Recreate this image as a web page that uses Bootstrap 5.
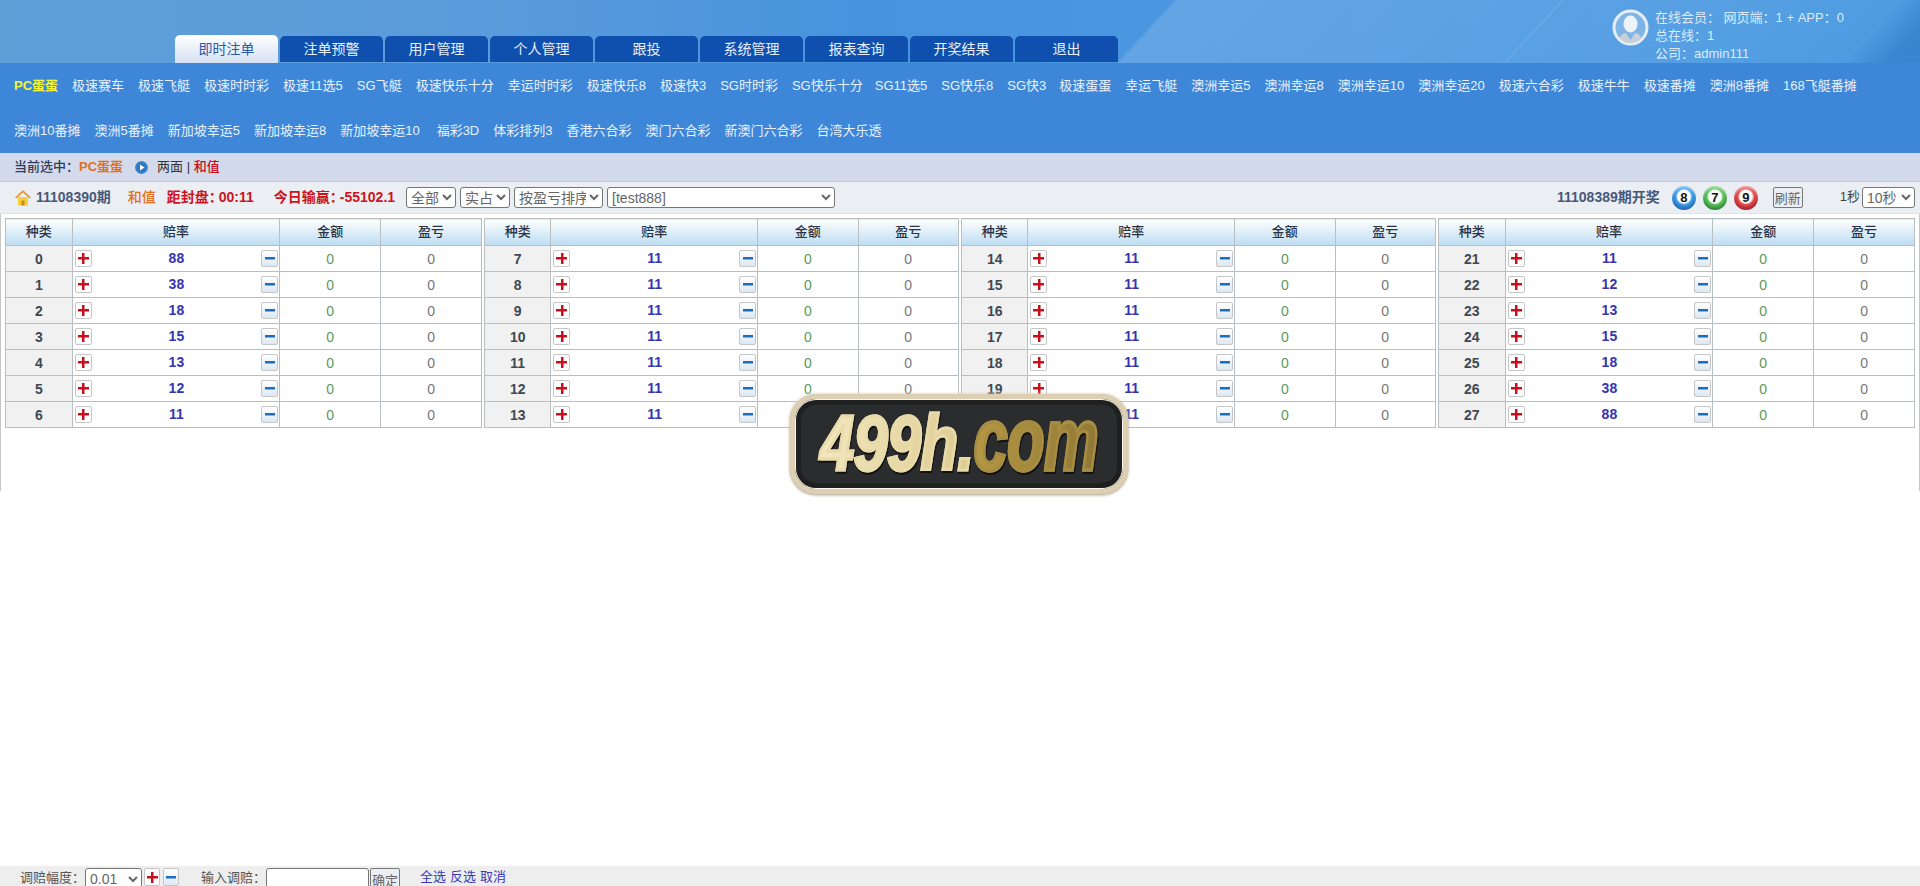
<!DOCTYPE html>
<html lang="zh-CN">
<head>
<meta charset="utf-8">
<title>即时注单</title>
<link href="https://cdn.jsdelivr.net/npm/bootstrap@5.3.0/dist/css/bootstrap.min.css" rel="stylesheet">
<style>
html,body{height:100%;overflow:hidden}
body{font-family:"Liberation Sans","Noto Sans CJK SC",sans-serif;font-size:13px;color:#333;background:#fff;line-height:1.3}
.shell{height:886px}
.hdr{height:63px;background:
 linear-gradient(133deg,transparent 1142px,rgba(255,255,255,.1) 1143px,transparent 1145px),
 linear-gradient(133deg,transparent 1390px,rgba(20,90,170,.35) 1425px),
 linear-gradient(133deg,transparent 858px,rgba(255,255,255,.14) 862px,rgba(255,255,255,.04) 1300px,transparent 1390px),
 linear-gradient(90deg,#5f9fd8 0,#5a9bdb 25%,#4793dd 45%,#4a96e0 60%,#4f9ce2 100%)}
.tabs{margin-left:175px;gap:2px;padding-bottom:1px}
.tabx{width:103px;height:26px;line-height:26px;text-align:center;font-size:14px;color:#e6effa;background:#0f4fae;border-radius:5px 5px 0 0;text-decoration:none}
.tabx.on{height:28px;line-height:28px;margin-top:-2px;margin-bottom:-1px;color:#2b5aa8;background:linear-gradient(#fff,#d5e1f2)}
.who{width:308px;padding-top:9px;color:#dcebfa;line-height:18px;gap:6px}
.who svg{flex:none}
.who .lines{white-space:pre}
.games{height:90px;background:#3e87d8;padding:0 0 0 7px;align-content:flex-start}
.games a{color:#e9f1fb;text-decoration:none;line-height:45px;padding:0 7px;white-space:nowrap}
.games a.on{color:#f4f63c;font-weight:700}
.games a.t2{margin-left:-2px}.games a.t1{margin-left:-1px}.games a.p3{margin-left:3px}
.crumb{height:29px;background:#d2daec;border-bottom:1px solid #c3c6cc;padding-left:14px}
.crumb b{color:#2d3c5c;font-weight:500}
.crumb .pc{color:#e2701e;font-weight:700;margin-right:12px}
.crumb svg{margin-right:9px}
.crumb .sum{color:#c8101c;font-weight:500}
.bar{height:32px;background:#ebeef2;padding:0 5px 0 15px;border-bottom:1px solid #e2e4e8}
.strong{font-size:14px;font-weight:700;white-space:nowrap}
.iss{color:#47597a;margin:0 17px 0 5px}
.org{color:#e2701e;margin-right:11px;font-weight:500}
.red{color:#cc1420}
.cln{margin-right:-4px}
.sel{height:21px;border:1px solid #767676;border-radius:3px;background:#fff;font:14px "Liberation Sans","Noto Sans CJK SC",sans-serif;color:#666;padding:0}
.s1{width:50px;margin-left:11px}.s2{width:50px;margin-left:4px}.s3{width:89px;margin-left:4px}.s4{width:228px;margin-left:4px}.s5{width:53px;margin-left:2px}
.ball{width:24px;height:24px;border-radius:50%;font-size:13px;font-weight:700;color:#111;text-align:center;line-height:23px;margin-left:7px;box-shadow:inset 0 -3px 3px rgba(0,0,40,.22),inset 0 2px 2px rgba(255,255,255,.55)}
.bb{background:radial-gradient(circle at 50% 44%,#fff 0 34%,#3a9ae6 46%,#1f78cc 100%)}
.bg1{background:radial-gradient(circle at 50% 44%,#fff 0 34%,#55c255 46%,#2f9a35 100%)}
.br{background:radial-gradient(circle at 50% 44%,#fff 0 34%,#e64848 46%,#bd2228 100%)}
.plainbtn{border:1px solid #777;border-radius:2px;background:#ebeef2;color:#666;font:13px "Liberation Sans","Noto Sans CJK SC",sans-serif;padding:0;height:21px;width:30px}
.wrap{height:277px;border-left:1px solid #c6c6c6;border-right:1px solid #c6c6c6;padding:4px 4px 0}
.quad{display:grid;grid-template-columns:477px 475px 475px 477px;column-gap:2px}
.odds{table-layout:fixed;--bs-table-border-color:#b9bec3;margin:0;font-size:14px}
.odds th,.odds td{padding:0;height:26px;text-align:center;vertical-align:middle;line-height:22px;font-weight:400;color:#777}
.odds thead th{height:27px;font-size:13px;font-weight:500;color:#2a3345;background:linear-gradient(#fff,#bcdcf2);--bs-table-bg:transparent}
.odds .c1{width:14%}.odds .c3{width:21.2%}
.odds .kind{background:#f1f1f1;--bs-table-bg:#f1f1f1;font-weight:700;color:#3f4952}
.odds .ov{display:flex;align-items:center;justify-content:space-between;padding:0 1px 0 2px;height:22px}
.odds .rate{font-weight:700;color:#3535b0;line-height:1;margin-bottom:2px}
.odds td.amt{color:#5a9a5a}
.up,.dn{width:17px;height:17px;border:1px solid #c6c6c6;border-radius:2px;padding:0;flex:none}
.up{background:linear-gradient(#c8101c,#c8101c) center/11px 2.5px no-repeat,linear-gradient(#c8101c,#c8101c) center/2.5px 11px no-repeat,#fff}
.dn{background:linear-gradient(#1c6cc0,#1c6cc0) center/10px 2.5px no-repeat,linear-gradient(#fff,#dde8f3)}
.foot{height:20px;background:#eee;padding-left:20px;padding-top:2px;color:#555;overflow:hidden;align-items:flex-start;white-space:nowrap}
.foot .s6{width:57px;margin-left:0;height:22px}
.foot .up,.foot .dn{height:18px;width:16px;margin-left:2px}
.foot .dn{margin-left:3px}
.foot .lab{line-height:20px}
.ipt{width:103px;height:22px;border:1px solid #767676;border-radius:3px;background:#fff;padding:0}
.foot .links{margin-left:20px;line-height:18px}
.foot .links a{color:#3b3bb5;text-decoration:none;margin-right:4px}
.stamp{position:absolute;left:790px;top:394px;width:338px;height:100px;border-radius:26px;background:#2b2c2e;border:5px solid #ddcfb2;box-shadow:0 0 0 1px #fbf6ec inset,0 0 0 6px #1e1f21 inset,0 1px 3px rgba(90,70,40,.5),0 0 4px #f1e9da;display:flex;align-items:center;justify-content:center;overflow:hidden}
.stamp .mk{display:inline-block;font:italic 700 78px/1 "Liberation Sans",sans-serif;transform:scaleX(.79);white-space:nowrap;letter-spacing:-1px;margin-top:-2px;filter:drop-shadow(1px 2px 0 #111)}
.stamp .a{-webkit-text-stroke:3px #e8dba9;background:linear-gradient(100deg,#f3e9c2,#dcc98f);-webkit-background-clip:text;background-clip:text;color:transparent}
.stamp .b{display:inline-block;transform:scaleY(1.13);transform-origin:50% 82%;-webkit-text-stroke:3px #a78d42;background:linear-gradient(100deg,#b89a45,#8d7636);-webkit-background-clip:text;background-clip:text;color:transparent}
</style>
</head>
<body>
<div class="shell d-flex flex-column position-relative">
  <header class="hdr d-flex">
    <nav class="tabs d-flex align-items-end">
      <a class="tabx on" href="#">即时注单</a>
      <a class="tabx" href="#">注单预警</a>
      <a class="tabx" href="#">用户管理</a>
      <a class="tabx" href="#">个人管理</a>
      <a class="tabx" href="#">跟投</a>
      <a class="tabx" href="#">系统管理</a>
      <a class="tabx" href="#">报表查询</a>
      <a class="tabx" href="#">开奖结果</a>
      <a class="tabx" href="#">退出</a>
    </nav>
    <div class="who d-flex ms-auto">
      <svg width="37" height="37" viewBox="0 0 37 37"><defs><clipPath id="cp"><circle cx="18.5" cy="18.5" r="15.5"/></clipPath></defs><circle cx="18.5" cy="18.5" r="16.5" fill="#7fb4e6" stroke="#e4edf6" stroke-width="3"/><g clip-path="url(#cp)"><ellipse cx="18.5" cy="15" rx="7" ry="8.5" fill="#eef3f8"/><path d="M6 37c0-9 4-13 8-13l4.500 7 4.500-7c4 0 8 4 8 13z" fill="#c9cfd6"/></g></svg>
      <div class="lines">在线会员： 网页端：1 + APP：0
总在线：1
公司：admin111</div>
    </div>
  </header>
  <nav class="games d-flex flex-wrap">
    <a class="on" href="#">PC蛋蛋</a><a href="#">极速赛车</a><a href="#">极速飞艇</a><a href="#">极速时时彩</a><a href="#">极速11选5</a><a href="#">SG飞艇</a><a href="#">极速快乐十分</a><a href="#">幸运时时彩</a><a href="#">极速快乐8</a><a href="#">极速快3</a><a href="#">SG时时彩</a><a href="#">SG快乐十分</a><a class="t2" href="#">SG11选5</a><a href="#">SG快乐8</a><a href="#">SG快3</a><a class="t1" href="#">极速蛋蛋</a><a href="#">幸运飞艇</a><a href="#">澳洲幸运5</a><a href="#">澳洲幸运8</a><a href="#">澳洲幸运10</a><a href="#">澳洲幸运20</a><a href="#">极速六合彩</a><a href="#">极速牛牛</a><a href="#">极速番摊</a><a href="#">澳洲8番摊</a><a href="#">168飞艇番摊</a><a href="#">澳洲10番摊</a><a href="#">澳洲5番摊</a><a href="#">新加坡幸运5</a><a href="#">新加坡幸运8</a><a href="#">新加坡幸运10</a><a class="p3" href="#">福彩3D</a><a href="#">体彩排列3</a><a href="#">香港六合彩</a><a href="#">澳门六合彩</a><a href="#">新澳门六合彩</a><a href="#">台湾大乐透</a>
  </nav>
  <div class="crumb d-flex align-items-center">
    <b>当前选中：</b><span class="pc">PC蛋蛋</span>
    <svg width="13" height="13" viewBox="0 0 13 13"><circle cx="6.500" cy="6.500" r="6.500" fill="#3c88cf"/><circle cx="6.500" cy="6.500" r="4.800" fill="#2f78c0"/><path d="M5 3.500v6l4.500-3z" fill="#fff"/></svg>
    <span>两面 | <span class="sum">和值</span></span>
  </div>
  <div class="bar d-flex align-items-center">
    <svg width="16" height="17" viewBox="0 0 16 17"><path d="M3 8v8.500h10V8z" fill="#f6cf3f"/><path d="M6.500 16.500v-5h3v5z" fill="#c98a1c"/><path d="M0 8.500 8 1l8 7.500-1.500 1L8 3.500 1.500 9.500z" fill="#e89a2e"/></svg>
    <span class="strong iss">11108390期</span>
    <span class="strong org">和值</span>
    <span class="strong red" style="margin-right:20px">距封盘<span class="cln">：</span>00:11</span>
    <span class="strong red">今日输赢<span class="cln">：</span>-55102.1</span>
    <select class="sel s1"><option>全部</option></select>
    <select class="sel s2"><option>实占</option></select>
    <select class="sel s3"><option>按盈亏排序</option></select>
    <select class="sel s4"><option>[test888]</option></select>
    <span class="strong iss ms-auto" style="margin-right:5px">11108389期开奖</span>
    <span class="ball bb">8</span><span class="ball bg1">7</span><span class="ball br">9</span>
    <button class="plainbtn" style="margin-left:15px">刷新</button>
    <span style="margin-left:37px;color:#444">1秒</span>
    <select class="sel s5"><option>10秒</option></select>
  </div>
  <main class="wrap">
    <div class="quad">
      <table class="table table-bordered odds"><thead><tr><th class="c1">种类</th><th>赔率</th><th class="c3">金额</th><th class="c3">盈亏</th></tr></thead><tbody>
<tr><td class="kind">0</td><td><div class="ov"><button class="up"></button><span class="rate">88</span><button class="dn"></button></div></td><td class="amt">0</td><td>0</td></tr>
<tr><td class="kind">1</td><td><div class="ov"><button class="up"></button><span class="rate">38</span><button class="dn"></button></div></td><td class="amt">0</td><td>0</td></tr>
<tr><td class="kind">2</td><td><div class="ov"><button class="up"></button><span class="rate">18</span><button class="dn"></button></div></td><td class="amt">0</td><td>0</td></tr>
<tr><td class="kind">3</td><td><div class="ov"><button class="up"></button><span class="rate">15</span><button class="dn"></button></div></td><td class="amt">0</td><td>0</td></tr>
<tr><td class="kind">4</td><td><div class="ov"><button class="up"></button><span class="rate">13</span><button class="dn"></button></div></td><td class="amt">0</td><td>0</td></tr>
<tr><td class="kind">5</td><td><div class="ov"><button class="up"></button><span class="rate">12</span><button class="dn"></button></div></td><td class="amt">0</td><td>0</td></tr>
<tr><td class="kind">6</td><td><div class="ov"><button class="up"></button><span class="rate">11</span><button class="dn"></button></div></td><td class="amt">0</td><td>0</td></tr>
      </tbody></table>
      <table class="table table-bordered odds"><thead><tr><th class="c1">种类</th><th>赔率</th><th class="c3">金额</th><th class="c3">盈亏</th></tr></thead><tbody>
<tr><td class="kind">7</td><td><div class="ov"><button class="up"></button><span class="rate">11</span><button class="dn"></button></div></td><td class="amt">0</td><td>0</td></tr>
<tr><td class="kind">8</td><td><div class="ov"><button class="up"></button><span class="rate">11</span><button class="dn"></button></div></td><td class="amt">0</td><td>0</td></tr>
<tr><td class="kind">9</td><td><div class="ov"><button class="up"></button><span class="rate">11</span><button class="dn"></button></div></td><td class="amt">0</td><td>0</td></tr>
<tr><td class="kind">10</td><td><div class="ov"><button class="up"></button><span class="rate">11</span><button class="dn"></button></div></td><td class="amt">0</td><td>0</td></tr>
<tr><td class="kind">11</td><td><div class="ov"><button class="up"></button><span class="rate">11</span><button class="dn"></button></div></td><td class="amt">0</td><td>0</td></tr>
<tr><td class="kind">12</td><td><div class="ov"><button class="up"></button><span class="rate">11</span><button class="dn"></button></div></td><td class="amt">0</td><td>0</td></tr>
<tr><td class="kind">13</td><td><div class="ov"><button class="up"></button><span class="rate">11</span><button class="dn"></button></div></td><td class="amt">0</td><td>0</td></tr>
      </tbody></table>
      <table class="table table-bordered odds"><thead><tr><th class="c1">种类</th><th>赔率</th><th class="c3">金额</th><th class="c3">盈亏</th></tr></thead><tbody>
<tr><td class="kind">14</td><td><div class="ov"><button class="up"></button><span class="rate">11</span><button class="dn"></button></div></td><td class="amt">0</td><td>0</td></tr>
<tr><td class="kind">15</td><td><div class="ov"><button class="up"></button><span class="rate">11</span><button class="dn"></button></div></td><td class="amt">0</td><td>0</td></tr>
<tr><td class="kind">16</td><td><div class="ov"><button class="up"></button><span class="rate">11</span><button class="dn"></button></div></td><td class="amt">0</td><td>0</td></tr>
<tr><td class="kind">17</td><td><div class="ov"><button class="up"></button><span class="rate">11</span><button class="dn"></button></div></td><td class="amt">0</td><td>0</td></tr>
<tr><td class="kind">18</td><td><div class="ov"><button class="up"></button><span class="rate">11</span><button class="dn"></button></div></td><td class="amt">0</td><td>0</td></tr>
<tr><td class="kind">19</td><td><div class="ov"><button class="up"></button><span class="rate">11</span><button class="dn"></button></div></td><td class="amt">0</td><td>0</td></tr>
<tr><td class="kind">20</td><td><div class="ov"><button class="up"></button><span class="rate">11</span><button class="dn"></button></div></td><td class="amt">0</td><td>0</td></tr>
      </tbody></table>
      <table class="table table-bordered odds"><thead><tr><th class="c1">种类</th><th>赔率</th><th class="c3">金额</th><th class="c3">盈亏</th></tr></thead><tbody>
<tr><td class="kind">21</td><td><div class="ov"><button class="up"></button><span class="rate">11</span><button class="dn"></button></div></td><td class="amt">0</td><td>0</td></tr>
<tr><td class="kind">22</td><td><div class="ov"><button class="up"></button><span class="rate">12</span><button class="dn"></button></div></td><td class="amt">0</td><td>0</td></tr>
<tr><td class="kind">23</td><td><div class="ov"><button class="up"></button><span class="rate">13</span><button class="dn"></button></div></td><td class="amt">0</td><td>0</td></tr>
<tr><td class="kind">24</td><td><div class="ov"><button class="up"></button><span class="rate">15</span><button class="dn"></button></div></td><td class="amt">0</td><td>0</td></tr>
<tr><td class="kind">25</td><td><div class="ov"><button class="up"></button><span class="rate">18</span><button class="dn"></button></div></td><td class="amt">0</td><td>0</td></tr>
<tr><td class="kind">26</td><td><div class="ov"><button class="up"></button><span class="rate">38</span><button class="dn"></button></div></td><td class="amt">0</td><td>0</td></tr>
<tr><td class="kind">27</td><td><div class="ov"><button class="up"></button><span class="rate">88</span><button class="dn"></button></div></td><td class="amt">0</td><td>0</td></tr>
      </tbody></table>
    </div>
  </main>
  <div class="flex-grow-1"></div>
  <footer class="foot d-flex">
    <span class="lab">调赔幅度：</span>
    <select class="sel s6"><option>0.01</option></select>
    <button class="up"></button><button class="dn"></button>
    <span class="lab" style="margin-left:22px">输入调赔：</span>
    <input class="ipt" type="text">
    <button class="plainbtn" style="margin-left:1px;height:22px">确定</button>
    <span class="links"><a href="#">全选</a><a href="#">反选</a><a href="#">取消</a></span>
  </footer>
  <div class="stamp"><span class="mk"><span class="a">499h.</span><span class="b">com</span></span></div>
</div>
<script src="https://cdn.jsdelivr.net/npm/bootstrap@5.3.0/dist/js/bootstrap.bundle.min.js"></script>
</body>
</html>
